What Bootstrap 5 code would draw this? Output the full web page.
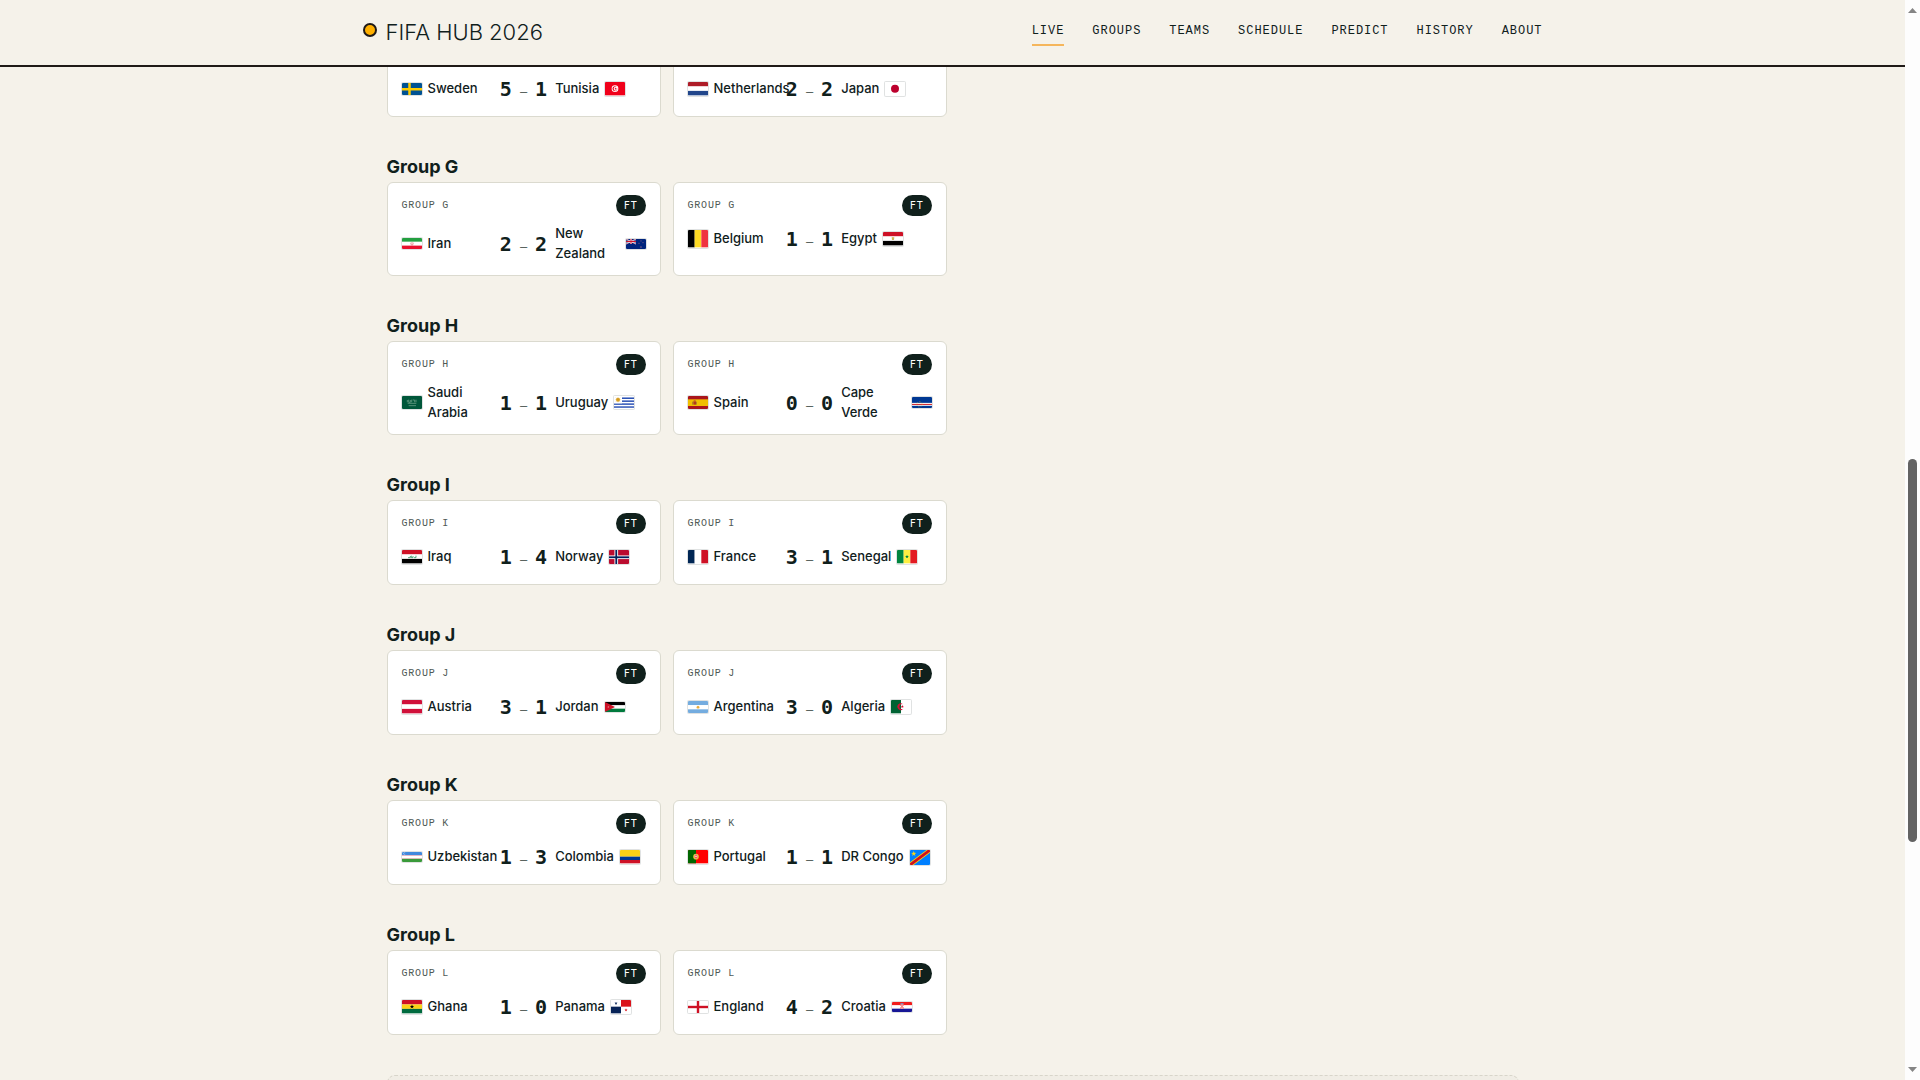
<!DOCTYPE html>
<html lang="en">
<head>
<meta charset="utf-8">
<meta name="viewport" content="width=device-width, initial-scale=1">
<title>FIFA Hub 2026 – Live</title>
<link href="https://cdn.jsdelivr.net/npm/bootstrap@5.3.0/dist/css/bootstrap.min.css" rel="stylesheet">
<style>
:root { --ink: #10201c; --paper: #f5f2ea; --rule: #dbdacf; --rail: 15px; --mono: "Liberation Mono", "DejaVu Sans Mono", monospace; --mono-tall: "DejaVu Sans Mono", "Liberation Mono", monospace; }
body { background: var(--paper); color: var(--ink); font-family: Inter, "Noto Sans", sans-serif; padding-right: var(--rail); }
.shell { max-width: 1180px; }
.site-header { right: var(--rail); background: var(--paper); border-bottom: 2px solid #1f1a17; }
.brand { color: var(--ink); font-size: 22px; font-weight: 300; gap: 9px; }
.brand-dot { width: 14px; height: 14px; border: 2px solid #1f1a17; background: #ffb000; margin-bottom: 6px; }
.site-nav { gap: 28px; }
.site-link { color: var(--ink); font: 12px/22px var(--mono); letter-spacing: .08em; padding-bottom: 2px; border-bottom: 2px solid transparent; }
.site-link.active { border-color: #f5b65c; }
.page-main { padding: 32px 24px 0; }
.group-block { margin-bottom: 40px; }
.group-title { font-size: 18px; line-height: 20px; font-weight: 700; margin-bottom: 5px; }
.match-grid { display: grid; grid-template-columns: repeat(auto-fill, minmax(240px, 1fr)); gap: 12px; }
.match { background: #fff; border: 1px solid var(--rule); border-radius: 6px; padding: 12px 14px; }
.match-label { font: 10px/15px var(--mono); letter-spacing: .08em; color: #4f5955; }
.match-status { font: 10px/15px var(--mono-tall); letter-spacing: .08em; background: var(--ink); color: #fff; padding: 3px 8px; }
.match-row { display: grid; grid-template-columns: minmax(0, 1fr) auto minmax(0, 1fr); gap: 8px; font-size: 13px; font-weight: 500; }
.side { gap: 6px; }
.flag { width: 20px; flex: none; border-radius: 1px; box-shadow: 0 0 0 1px rgba(16, 32, 28, .13); }
.score { gap: 8px; font: 700 20px/30px var(--mono-tall); }
.score-dash { font: 12px/12px var(--mono-tall); color: #4f5955; }
.notice { height: 120px; border: 1px dashed #d8d5ca; border-radius: 8px; background: #f0ede5; }
.rail { width: var(--rail); background: #fdfdfd; }
.rail-arrow { width: 9px; height: 5px; fill: #858585; }
.rail-thumb { position: absolute; top: 42.5%; height: 35.5%; width: 9px; background: #636363; }
</style>
</head>
<body class="vh-100 overflow-hidden">
<header class="site-header position-fixed top-0 start-0 z-3">
  <div class="shell mx-auto d-flex justify-content-between align-items-center py-3">
    <a class="brand d-flex align-items-center text-decoration-none" href="#"><span class="brand-dot rounded-circle"></span>FIFA HUB 2026</a>
    <nav class="site-nav d-flex" aria-label="Main">
      <a class="site-link active text-decoration-none" href="#" aria-current="page">LIVE</a>
      <a class="site-link text-decoration-none" href="#">GROUPS</a>
      <a class="site-link text-decoration-none" href="#">TEAMS</a>
      <a class="site-link text-decoration-none" href="#">SCHEDULE</a>
      <a class="site-link text-decoration-none" href="#">PREDICT</a>
      <a class="site-link text-decoration-none" href="#">HISTORY</a>
      <a class="site-link text-decoration-none" href="#">ABOUT</a>
    </nav>
  </div>
</header>
<main class="page-main shell mx-auto">
  <div id="groups"></div>
  <section class="notice"></section>
</main>
<div class="rail position-fixed top-0 end-0 h-100 d-flex flex-column justify-content-between align-items-center py-1" aria-hidden="true">
  <svg class="rail-arrow mt-1" viewBox="0 0 9 5"><path d="M0 5 4.500 0 9 5z"/></svg>
  <div class="rail-thumb rounded-pill"></div>
  <svg class="rail-arrow mb-1" viewBox="0 0 9 5"><path d="M0 0 4.500 5 9 0z"/></svg>
</div>
<script src="https://cdn.jsdelivr.net/npm/bootstrap@5.3.0/dist/js/bootstrap.bundle.min.js"></script>
<script>
// Stripe helpers: each flag is [width, height, svg body] in its official proportions.
const rect = (x, y, w, h, c) => `<rect x="${x}" y="${y}" width="${w}" height="${h}" fill="${c}"/>`;
const rows = (w, h, ...cs) => [w, h, cs.map((c, i) => rect(0, i * h / cs.length, w, h / cs.length, c)).join('')];
const cols = (w, h, ...cs) => [w, h, cs.map((c, i) => rect(i * w / cs.length, 0, w / cs.length, h, c)).join('')];
const add = (flag, extra) => [flag[0], flag[1], flag[2] + extra];
const star = (cx, cy, r, c) => {
  let p = '';
  for (let i = 0; i < 10; i++) {
    const a = Math.PI * i / 5, k = i % 2 ? r * .4 : r;
    p += `${(cx + k * Math.sin(a)).toFixed(2)},${(cy - k * Math.cos(a)).toFixed(2)} `;
  }
  return `<polygon points="${p}" fill="${c}"/>`;
};
const flags = {
  Sweden: [80, 50, rect(0, 0, 80, 50, '#005293') + rect(25, 0, 10, 50, '#fecb00') + rect(0, 20, 80, 10, '#fecb00')],
  Tunisia: [60, 40, rect(0, 0, 60, 40, '#f0001a') + '<circle cx="30" cy="20" r="10" fill="#fff"/><circle cx="30" cy="20" r="7.500" fill="#f0001a"/><circle cx="32" cy="20" r="6" fill="#fff"/>' + star(32, 20, 4.500, '#f0001a')],
  Netherlands: rows(60, 40, '#ae1c28', '#fff', '#21468b'),
  Japan: [60, 40, rect(0, 0, 60, 40, '#fff') + '<circle cx="30" cy="20" r="12" fill="#bc002d"/>'],
  Iran: add(rows(70, 40, '#239f40', '#fff', '#e8112d'), '<path d="M35 14v12M31 16q-3 5 3 9M39 16q3 5-3 9" fill="none" stroke="#da3340" stroke-width="1.500"/>'),
  'New Zealand': [80, 40, rect(0, 0, 80, 40, '#00247d') + '<path d="M0 0 40 20M40 0 0 20" stroke="#fff" stroke-width="4"/><path d="M0 0 40 20M40 0 0 20" stroke="#cc142b" stroke-width="1.500"/><path d="M20 0v20M0 10h40" stroke="#fff" stroke-width="7"/><path d="M20 0v20M0 10h40" stroke="#cc142b" stroke-width="4"/>' + star(60, 8, 3, '#d88') + star(52, 17, 3, '#d88') + star(68, 15, 3, '#d88') + star(60, 32, 4, '#d88')],
  Belgium: cols(75, 65, '#000', '#fdda24', '#ef3340'),
  Egypt: add(rows(60, 40, '#ce1126', '#fff', '#000'), '<path d="M26 16h3l1-2 1 2h3l-1 8h-6z" fill="#d2b45a"/>'),
  'Saudi Arabia': [60, 40, rect(0, 0, 60, 40, '#00573a') + '<path d="M16 12v7M20 11v8h5v-7M29 11v8M32 12h6v7M42 11v8M17 22h26" fill="none" stroke="#7fae96" stroke-width="2"/><path d="M20 29h22" stroke="#a9c9b8" stroke-width="1.500"/>'],
  Uruguay: [60, 40, rows(60, 40, '#fff', '#1c45b0', '#fff', '#1c45b0', '#fff', '#1c45b0', '#fff', '#1c45b0', '#fff')[2] + rect(0, 0, 24, 22, '#fff') + '<circle cx="12" cy="11" r="6" fill="#e0a92d"/><path d="M12 3v16M4 11h16M6 5l12 12M18 5 6 17" stroke="#c98f1c" stroke-width="1"/>'],
  Spain: [60, 40, rect(0, 0, 60, 40, '#aa151b') + rect(0, 10, 60, 20, '#f1bf00') + rect(16, 16, 8, 10, '#ad3a1f') + rect(13, 17, 2, 9, '#8f6b34') + rect(25, 17, 2, 9, '#8f6b34') + rect(17, 13, 6, 3, '#b9562c')],
  'Cape Verde': [68, 40, rect(0, 0, 68, 40, '#003893') + rect(0, 20, 68, 10, '#fff') + rect(0, 23.500, 68, 3.500, '#cf2027') + '<circle cx="25.500" cy="25" r="9" fill="none" stroke="#f7d116" stroke-width="2" stroke-dasharray="2 3.650"/>'],
  Iraq: add(rows(60, 40, '#ce1126', '#fff', '#000'), '<path d="M18 23h7v-5M28 17v6h5v-5M36 23h6v-6" fill="none" stroke="#007a3d" stroke-width="2"/>'),
  Norway: [88, 64, rect(0, 0, 88, 64, '#ba0c2f') + rect(24, 0, 16, 64, '#fff') + rect(0, 24, 88, 16, '#fff') + rect(28, 0, 8, 64, '#00205b') + rect(0, 28, 88, 8, '#00205b')],
  France: cols(60, 40, '#002654', '#fff', '#ce1126'),
  Senegal: add(cols(60, 40, '#00853f', '#fdef42', '#e31b23'), star(30, 20, 6, '#00853f')),
  Austria: rows(60, 40, '#d0103a', '#fff', '#d0103a'),
  Jordan: add(rows(80, 40, '#000', '#fff', '#007a3d'), '<path d="M0 0 40 20 0 40z" fill="#ce1126"/>' + star(13, 20, 3.500, '#fff')),
  Argentina: add(rows(80, 50, '#74acdf', '#fff', '#74acdf'), '<circle cx="40" cy="25" r="5" fill="#e9ac3a"/><path d="M40 18v14M33 25h14M35 20l10 10M45 20 35 30" stroke="#e9ac3a"/>'),
  Algeria: add(cols(60, 40, '#006233', '#fff'), '<path d="M36 12.500a10 10 0 1 0 0 15 8 8 0 1 1 0-15z" fill="#d21034"/>' + star(34, 20, 5, '#d21034')),
  Uzbekistan: [80, 40, rect(0, 0, 80, 40, '#fff') + rect(0, 0, 80, 12.500, '#4189dd') + rect(0, 12.500, 80, 1, '#ce1126') + rect(0, 26.500, 80, 1, '#ce1126') + rect(0, 27.500, 80, 12.500, '#3a9a3a') + '<circle cx="10" cy="6" r="4" fill="#fff"/><circle cx="12" cy="6" r="4" fill="#4189dd"/>'],
  Colombia: [60, 40, rect(0, 0, 60, 20, '#fcd116') + rect(0, 20, 60, 10, '#003893') + rect(0, 30, 60, 10, '#ce1126')],
  Portugal: [60, 40, rect(0, 0, 60, 40, '#f00') + rect(0, 0, 24, 40, '#060') + '<circle cx="24" cy="20" r="8.500" fill="#d9c72b"/>' + '<path d="M19.500 14.500h9v7q0 4-4.500 5-4.500-1-4.500-5z" fill="#e22" stroke="#fff"/>' + rect(22, 17, 4, 5, '#fff')],
  'DR Congo': [80, 60, rect(0, 0, 80, 60, '#007fff') + '<path d="M0 60 80 0" stroke="#f7d618" stroke-width="17"/><path d="M0 60 80 0" stroke="#ce1021" stroke-width="11"/>' + star(15, 15, 11, '#f7d618')],
  Ghana: add(rows(60, 40, '#ce1126', '#fcd116', '#006b3f'), star(30, 20, 7, '#000')),
  Panama: [60, 40, rect(0, 0, 60, 40, '#fff') + rect(30, 0, 30, 20, '#da121a') + rect(0, 20, 30, 20, '#072357') + star(15, 10, 5, '#072357') + star(45, 30, 5, '#da121a')],
  England: [50, 30, rect(0, 0, 50, 30, '#fff') + rect(22, 0, 6, 30, '#ce1124') + rect(0, 12, 50, 6, '#ce1124')],
  Croatia: add(rows(80, 40, '#f21c1c', '#fff', '#171796'), rect(34, 9, 12, 18, '#fff') + rect(34, 9, 4, 6, '#f21c1c') + rect(42, 9, 4, 6, '#f21c1c') + rect(38, 15, 4, 6, '#f21c1c') + rect(34, 21, 4, 6, '#f21c1c') + rect(42, 21, 4, 6, '#f21c1c') + rect(34, 5, 12, 4, '#6aa0dd'))
};
const results = {
  F: [['Sweden', 5, 1, 'Tunisia'], ['Netherlands', 2, 2, 'Japan']],
  G: [['Iran', 2, 2, 'New Zealand'], ['Belgium', 1, 1, 'Egypt']],
  H: [['Saudi Arabia', 1, 1, 'Uruguay'], ['Spain', 0, 0, 'Cape Verde']],
  I: [['Iraq', 1, 4, 'Norway'], ['France', 3, 1, 'Senegal']],
  J: [['Austria', 3, 1, 'Jordan'], ['Argentina', 3, 0, 'Algeria']],
  K: [['Uzbekistan', 1, 3, 'Colombia'], ['Portugal', 1, 1, 'DR Congo']],
  L: [['Ghana', 1, 0, 'Panama'], ['England', 4, 2, 'Croatia']]
};
const flag = t => `<svg class="flag" viewBox="0 0 ${flags[t][0]} ${flags[t][1]}" aria-hidden="true">${flags[t][2]}</svg>`;
const card = (g, [a, x, y, b]) => `
  <article class="match">
    <div class="d-flex justify-content-between align-items-center mb-2">
      <span class="match-label">GROUP ${g}</span><span class="match-status rounded-pill">FT</span>
    </div>
    <div class="match-row align-items-center">
      <div class="side d-flex align-items-center">${flag(a)}<span>${a}</span></div>
      <div class="score d-flex align-items-baseline"><span>${x}</span><span class="score-dash">–</span><span>${y}</span></div>
      <div class="side d-flex align-items-center"><span>${b}</span>${flag(b)}</div>
    </div>
  </article>`;
// Group F is scrolled under the header, so its title is already out of view.
document.getElementById('groups').innerHTML = Object.entries(results).map(([g, games]) => `
  <section class="group-block">${g === 'F' ? '' : `<h2 class="group-title">Group ${g}</h2>`}
    <div class="match-grid">${games.map(m => card(g, m)).join('')}</div>
  </section>`).join('');
</script>
</body>
</html>
